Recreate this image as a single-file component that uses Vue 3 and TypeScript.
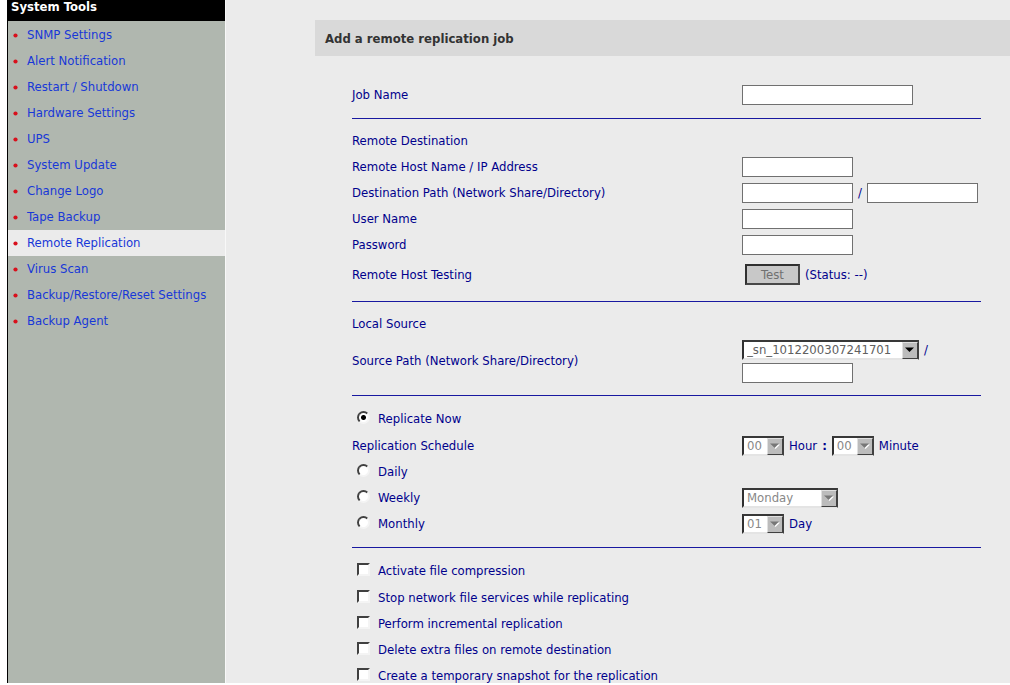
<script setup lang="ts">
import { ref } from 'vue'

const menu: string[] = [
  'SNMP Settings',
  'Alert Notification',
  'Restart / Shutdown',
  'Hardware Settings',
  'UPS',
  'System Update',
  'Change Logo',
  'Tape Backup',
  'Remote Replication',
  'Virus Scan',
  'Backup/Restore/Reset Settings',
  'Backup Agent',
]
const active = 'Remote Replication'

const options: string[] = [
  'Activate file compression',
  'Stop network file services while replicating',
  'Perform incremental replication',
  'Delete extra files on remote destination',
  'Create a temporary snapshot for the replication',
]

const schedule = ref('now')
const checked = ref<string[]>([])
</script>

<template>
  <div class="page">
    <nav class="sidebar">
      <h2 class="side-title">System Tools</h2>
      <ul class="menu">
        <li v-for="item in menu" :key="item" :class="{ active: item === active }">
          <svg class="bullet" viewBox="0 0 5 5" aria-hidden="true"><circle cx="2.5" cy="2.5" r="2.1" /></svg>
          <a href="#">{{ item }}</a>
        </li>
      </ul>
    </nav>

    <main class="main">
      <h1 class="title">Add a remote replication job</h1>

      <form class="form" @submit.prevent>
        <section class="group">
          <div class="row">
            <label for="job">Job Name</label>
            <div class="cell"><input id="job" class="text wide" type="text" /></div>
          </div>
        </section>

        <section class="group">
          <div class="row"><span>Remote Destination</span></div>
          <div class="row">
            <label for="host">Remote Host Name / IP Address</label>
            <div class="cell"><input id="host" class="text" type="text" /></div>
          </div>
          <div class="row">
            <label for="share">Destination Path (Network Share/Directory)</label>
            <div class="cell">
              <input id="share" class="text" type="text" />
              <span>/</span>
              <input class="text" type="text" aria-label="Destination directory" />
            </div>
          </div>
          <div class="row">
            <label for="user">User Name</label>
            <div class="cell"><input id="user" class="text" type="text" /></div>
          </div>
          <div class="row">
            <label for="pass">Password</label>
            <div class="cell"><input id="pass" class="text" type="password" /></div>
          </div>
          <div class="row test-row">
            <span>Remote Host Testing</span>
            <div class="cell">
              <button class="test" type="button" disabled>Test</button>
              <span>(Status: --)</span>
            </div>
          </div>
        </section>

        <section class="group">
          <div class="row"><span>Local Source</span></div>
          <div class="row source-row">
            <label for="source">Source Path (Network Share/Directory)</label>
            <div class="stack">
              <div class="cell">
                <span class="drop source">
                  <select id="source"><option>_sn_1012200307241701</option></select>
                  <svg class="arrow" viewBox="0 0 14 14" aria-hidden="true"><path d="M2 4h9L6.500 8.500z" /></svg>
                </span>
                <span>/</span>
              </div>
              <input class="text" type="text" aria-label="Source directory" />
            </div>
          </div>
        </section>

        <section class="group choices">
          <div class="row">
            <label class="choice"><input v-model="schedule" type="radio" name="schedule" value="now" /><span>Replicate Now</span></label>
          </div>
          <div class="row">
            <span>Replication Schedule</span>
            <div class="cell">
              <span class="drop small off">
                <select id="hour" disabled><option>00</option></select>
                <svg class="arrow" viewBox="0 0 14 14" aria-hidden="true"><path class="lit" d="M3 5h9L7.500 9.500z" /><path d="M2 4h9L6.500 8.500z" /></svg>
              </span>
              <label for="hour">Hour</label>
              <b>:</b>
              <span class="drop small off">
                <select id="minute" disabled><option>00</option></select>
                <svg class="arrow" viewBox="0 0 14 14" aria-hidden="true"><path class="lit" d="M3 5h9L7.500 9.500z" /><path d="M2 4h9L6.500 8.500z" /></svg>
              </span>
              <label for="minute">Minute</label>
            </div>
          </div>
          <div class="row">
            <label class="choice"><input v-model="schedule" type="radio" name="schedule" value="daily" /><span>Daily</span></label>
          </div>
          <div class="row">
            <label class="choice"><input v-model="schedule" type="radio" name="schedule" value="weekly" /><span>Weekly</span></label>
            <div class="cell">
              <span class="drop medium off">
                <select disabled aria-label="Weekday"><option>Monday</option></select>
                <svg class="arrow" viewBox="0 0 14 14" aria-hidden="true"><path class="lit" d="M3 5h9L7.500 9.500z" /><path d="M2 4h9L6.500 8.500z" /></svg>
              </span>
            </div>
          </div>
          <div class="row">
            <label class="choice"><input v-model="schedule" type="radio" name="schedule" value="monthly" /><span>Monthly</span></label>
            <div class="cell">
              <span class="drop small off">
                <select id="day" disabled><option>01</option></select>
                <svg class="arrow" viewBox="0 0 14 14" aria-hidden="true"><path class="lit" d="M3 5h9L7.500 9.500z" /><path d="M2 4h9L6.500 8.500z" /></svg>
              </span>
              <label for="day">Day</label>
            </div>
          </div>
        </section>

        <section class="group choices">
          <div v-for="option in options" :key="option" class="row full">
            <label class="choice"><input v-model="checked" type="checkbox" :value="option" /><span>{{ option }}</span></label>
          </div>
        </section>
      </form>
    </main>
  </div>
</template>

<style>
body {
  background: #fff;
}
</style>

<style scoped>
.page {
  display: flex;
  height: calc(100vh - 2px);
  margin-left: 7px;
  overflow: hidden;
  border-left: 1px solid #000;
  box-sizing: border-box;
  background: #ebebeb;
  color: #00008c;
  font: 13px/16px "DejaVu Sans Condensed", "Noto Sans", sans-serif;
}

.sidebar {
  flex: 0 0 218px;
  box-sizing: border-box;
  border-right: 1px solid #f8f8f8;
  background: #b0b7af;
}

.side-title {
  margin: 0;
  padding: 0 3px 7px;
  background: #000;
  color: #fff;
  font-size: 13px;
  line-height: 14px;
}

.menu {
  margin: 0;
  padding: 1px 0 0;
  list-style: none;
}

.menu li {
  display: flex;
  align-items: center;
  gap: 9px;
  height: 26px;
  padding-left: 5px;
}

.menu li.active {
  background: #ebebeb;
}

.menu a {
  color: #1838d8;
  text-decoration: none;
}

.bullet {
  width: 5px;
  height: 5px;
  fill: #d8101c;
}

.main {
  flex: 1;
  min-width: 0;
  padding: 20px 0 0 89px;
}

.title {
  margin: 0 0 26px;
  padding: 11px 10px 9px;
  background: #d9d9d9;
  color: #333;
  font-size: 13px;
  line-height: 16px;
}

.form {
  margin: 0 29px 0 37px;
}

.group + .group {
  margin-top: 10px;
  padding-top: 9px;
  border-top: 1px solid #1818a0;
}

.row {
  display: grid;
  grid-template-columns: 62fr 38fr;
  align-items: center;
  height: 26px;
  white-space: nowrap;
}

.row.full {
  grid-template-columns: 1fr;
}

.test-row {
  height: 33px;
}

.source-row {
  height: 48px;
}

.choices .row:first-child {
  height: 28px;
}

.cell {
  display: flex;
  align-items: center;
  gap: 5px;
}

.stack {
  display: flex;
  flex-direction: column;
  align-items: flex-start;
  gap: 3px;
}

.text {
  width: 111px;
  height: 20px;
  box-sizing: border-box;
  padding: 0 3px;
  border: 1px solid #707070;
  background: #fff;
  font: inherit;
}

.text.wide {
  width: 171px;
}

.test {
  width: 55px;
  height: 21px;
  margin-left: 3px;
  padding: 0;
  border: 2px solid;
  border-color: #303030 #484848 #484848 #303030;
  background: #c8c8c8;
  color: #707070;
  font: inherit;
  line-height: 16px;
}

.drop {
  position: relative;
  display: inline-flex;
  height: 20px;
}

.drop select {
  width: 100%;
  height: 20px;
  box-sizing: border-box;
  padding: 0 18px 0 3px;
  appearance: none;
  border: 2px solid;
  border-color: #383838 #404040 #e4e4e4 #303030;
  border-radius: 0;
  background: #fff;
  color: #606060;
  font: inherit;
  opacity: 1;
}

.drop.off select {
  color: #888;
}

.source {
  width: 177px;
}

.small {
  width: 42px;
}

.medium {
  width: 96px;
}

.arrow {
  position: absolute;
  top: 2px;
  right: 1px;
  width: 16px;
  height: 17px;
  box-sizing: border-box;
  border: 1px solid;
  border-color: #e0e0e0 #404040 #404040 #e0e0e0;
  background: #bcbcbc;
  fill: #000;
  pointer-events: none;
}

.off .arrow {
  fill: #777;
}

.off .arrow .lit {
  fill: #fff;
}

.choice {
  display: flex;
  align-items: center;
  gap: 8px;
  padding-left: 5px;
}

.choice input {
  flex: none;
  width: 13px;
  height: 13px;
  margin: 0 0 3px;
  box-sizing: border-box;
  appearance: none;
  border: 2px solid;
  border-color: #404040 #f4f4f4 #f4f4f4 #404040;
  background: #fff;
}

.choice input[type="radio"] {
  border-radius: 50%;
}

.choice input[type="radio"]:checked {
  background: radial-gradient(circle, #000 0 2px, #fff 3px);
}
</style>
